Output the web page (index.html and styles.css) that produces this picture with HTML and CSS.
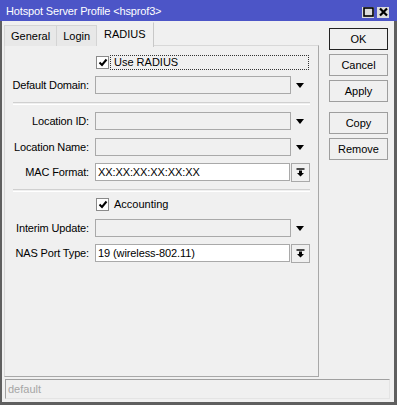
FILE: index.html
```html
<!DOCTYPE html>
<html lang="en">
<head>
    <meta charset="UTF-8">
    <title>Hotspot Server Profile</title>
    <link rel="stylesheet" href="styles.css">
</head>
<body>
    <div class="window">
        <div class="titlebar">
            <span class="title">Hotspot Server Profile &lt;hsprof3&gt;</span>
            <div class="title-btns">
                <span class="tbtn">
                    <svg width="11" height="10" viewBox="0 0 11 10"><rect x="1" y="1" width="9" height="8" fill="none" stroke="#000" stroke-width="1.6"/></svg>
                </span>
                <span class="tbtn">
                    <svg width="11" height="10" viewBox="0 0 11 10"><path d="M2 1.5 L9 8.5 M9 1.5 L2 8.5" stroke="#000" stroke-width="2.2"/></svg>
                </span>
            </div>
        </div>
        <div class="frame">
            <div class="main">
                <div class="pane">
                    <div class="tabs">
                        <div class="tab">General</div>
                        <div class="tab">Login</div>
                        <div class="tab active">RADIUS</div>
                    </div>
                    <div class="panel">
                        <div class="check-row first">
                            <span class="check"><svg width="10" height="9" viewBox="0 0 10 9"><path d="M1.5 4.5 L4 7 L8.5 1.5" fill="none" stroke="#000" stroke-width="2"/></svg></span>
                            <span class="check-label focused">Use RADIUS</span>
                        </div>
                        <div class="row gap6">
                            <label>Default Domain:</label>
                            <div class="field"></div>
                            <span class="drop"></span>
                        </div>
                        <div class="sep s1"></div>
                        <div class="row gap7">
                            <label>Location ID:</label>
                            <div class="field"></div>
                            <span class="drop"></span>
                        </div>
                        <div class="row gap8">
                            <label>Location Name:</label>
                            <div class="field"></div>
                            <span class="drop"></span>
                        </div>
                        <div class="row gap7">
                            <label>MAC Format:</label>
                            <div class="field white">XX:XX:XX:XX:XX:XX</div>
                            <span class="pick"><svg width="9" height="9" viewBox="0 0 9 9"><path d="M0.5 1 H8.5" stroke="#000" stroke-width="1.4"/><path d="M3 2.5 H6 V5 H8 L4.5 8.5 L1 5 H3 Z" fill="#000"/></svg></span>
                        </div>
                        <div class="sep s2"></div>
                        <div class="check-row">
                            <span class="check"><svg width="10" height="9" viewBox="0 0 10 9"><path d="M1.5 4.5 L4 7 L8.5 1.5" fill="none" stroke="#000" stroke-width="2"/></svg></span>
                            <span class="check-label">Accounting</span>
                        </div>
                        <div class="row gap7">
                            <label>Interim Update:</label>
                            <div class="field"></div>
                            <span class="drop"></span>
                        </div>
                        <div class="row gap7">
                            <label>NAS Port Type:</label>
                            <div class="field white">19 (wireless-802.11)</div>
                            <span class="pick"><svg width="9" height="9" viewBox="0 0 9 9"><path d="M0.5 1 H8.5" stroke="#000" stroke-width="1.4"/><path d="M3 2.5 H6 V5 H8 L4.5 8.5 L1 5 H3 Z" fill="#000"/></svg></span>
                        </div>
                    </div>
                </div>
                <div class="buttons">
                    <button class="btn default">OK</button>
                    <button class="btn">Cancel</button>
                    <button class="btn">Apply</button>
                    <button class="btn spaced">Copy</button>
                    <button class="btn">Remove</button>
                </div>
            </div>
            <div class="status">default</div>
        </div>
    </div>
</body>
</html>
```

FILE: styles.css
```css
body { margin: 0; font-family: "Liberation Sans", Arial, sans-serif; font-size: 11px; color: #000; }
.window {
    width: 397px;
    height: 405px;
    display: flex;
    flex-direction: column;
    background: #f0f0f0;
}
.titlebar {
    height: 21px;
    background: #4c55c7;
    color: #fff;
    display: flex;
    align-items: center;
    justify-content: space-between;
    padding: 0 8px 0 6px;
}
.title { font-size: 11px; letter-spacing: -0.15px; }
.title-btns { display: flex; gap: 3px; padding-top: 3px; }
.tbtn {
    width: 12px;
    height: 11px;
    background: #dcdcdc;
    display: flex;
    align-items: center;
    justify-content: center;
}
.frame {
    flex: 1;
    border: 2px solid #5f5f5f;
    border-top: none;
    border-right-width: 3px;
    border-bottom-width: 3px;
    padding-top: 1px;
    display: flex;
    flex-direction: column;
}
.main { display: flex; }
.pane { margin-left: 2px; width: 315px; }
.tabs { display: flex; height: 24px; margin-bottom: -1px; position: relative; z-index: 1; }
.tab {
    margin-top: 3px;
    height: 20px;
    padding: 0 6px;
    border: 1px solid #d4d4d4;
    border-bottom: none;
    background: #e8e8e8;
    line-height: 21px;
}
.tab + .tab { border-left: none; }
.tab.active {
    margin-top: 0;
    height: 24px;
    line-height: 22px;
    padding: 0 7px;
    background: #f0f0f0;
    border-color: #c8c8c8;
    border-top-color: #f0f0f0;
}
.panel {
    height: 332px;
    box-sizing: border-box;
    border: 1px solid #a8a8a8;
    border-top-color: #d8d8d8;
    border-left-color: #d8d8d8;
}
.check-row { display: flex; align-items: center; height: 15px; margin-top: 5px; padding-left: 91px; }
.check-row.first { margin-top: 9px; }
.check {
    width: 11px;
    height: 11px;
    border: 1px solid #8a8a8a;
    background: #fff;
    display: flex;
    align-items: center;
    justify-content: center;
}
.check-label { height: 13px; line-height: 13px; padding: 0 2px 0 3px; margin-left: 1px; border: 1px dotted transparent; }
.check-label.focused { border-color: #333; width: 192px; }
.row { display: flex; align-items: center; height: 18px; }
.gap6 { margin-top: 6px; }
.gap7 { margin-top: 7px; }
.gap8 { margin-top: 8px; }
.row label { width: 84px; text-align: right; margin-right: 6px; letter-spacing: -0.15px; }
.field {
    width: 196px;
    height: 18px;
    box-sizing: border-box;
    border: 1px solid #a9a9a9;
    background: #f0f0f0;
    padding-left: 2px;
    line-height: 16px;
    letter-spacing: -0.1px;
}
.field.white { background: #fff; width: 195px; }
.drop {
    width: 0;
    height: 0;
    margin-left: 5px;
    border-left: 4.5px solid transparent;
    border-right: 4.5px solid transparent;
    border-top: 5px solid #000;
}
.pick {
    width: 17px;
    height: 17px;
    margin-left: 1px;
    border: 1px solid #a9a9a9;
    display: flex;
    align-items: center;
    justify-content: center;
}
.sep { margin-left: 8px; width: 297px; height: 1px; border-top: 1px solid #d0d0d0; border-bottom: 1px solid #fff; }
.s1 { margin-top: 8px; }
.s2 { margin-top: 8px; }
.buttons { margin-left: 10px; margin-top: 6px; display: flex; flex-direction: column; gap: 4px; }
.btn {
    width: 59px;
    height: 22px;
    font-family: "Liberation Sans", Arial, sans-serif;
    font-size: 11px;
    background: #f0f0f0;
    border: 1px solid #9e9e9e;
    padding: 0;
    color: #000;
}
.btn.default { border-color: #222; }
.btn.spaced { margin-top: 6px; }
.status {
    margin: 2px 4px 0 3px;
    height: 18px;
    border-top: 1px solid #a0a0a0;
    border-left: 1px solid #a0a0a0;
    border-right: 1px solid #e4e4e4;
    border-bottom: 1px solid #e4e4e4;
    color: #a6a6a6;
    padding-left: 2px;
    line-height: 18px;
}
```
